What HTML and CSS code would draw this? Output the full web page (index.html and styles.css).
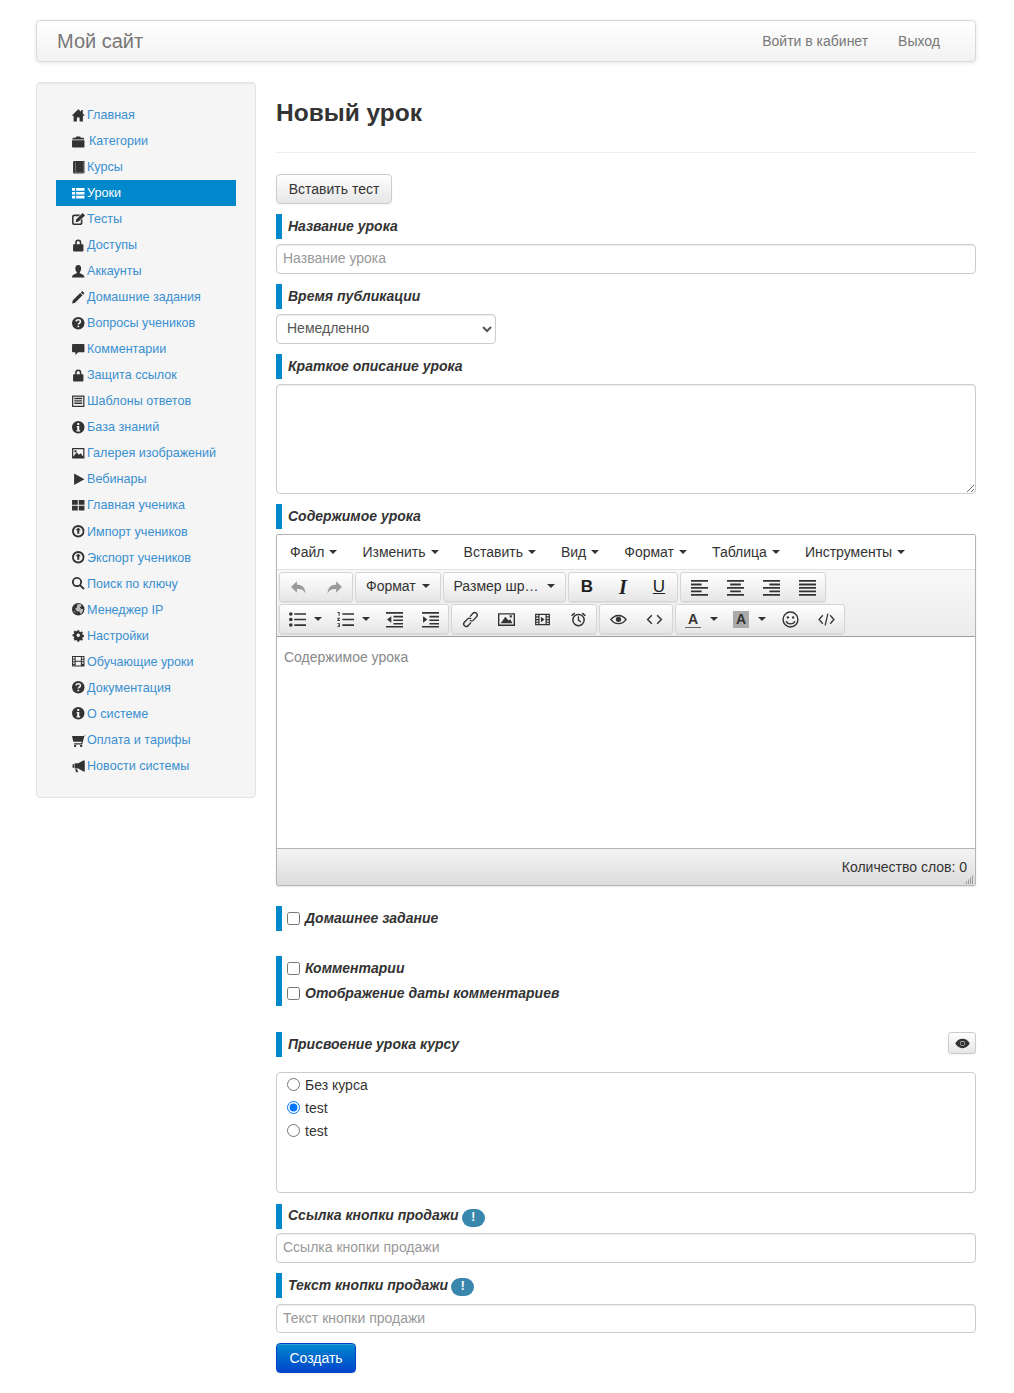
FILE: index.html
```html
<!DOCTYPE html>
<html lang="ru">
<head>
<meta charset="utf-8">
<title>Новый урок</title>
<link rel="stylesheet" href="styles.css">
</head>
<body>
<svg class="defs" xmlns="http://www.w3.org/2000/svg">
<symbol id="home" viewBox="0 0 14 14"><path d="M7 1.2 .6 7.4h1.9V13h3.2V9.2h2.6V13h3.2V7.4h1.900L11.4 5.300V2H9.800v1.700z"/></symbol>
<symbol id="folder" viewBox="0 0 14 14"><path d="M1.500 3.600h3l.6-1.100h3.800l.6 1.100h3v1.600h-11zM1 6h12v6.200q0 .8-.8.8H1.800q-.8 0-.8-.8z"/></symbol>
<symbol id="book" viewBox="0 0 14 14"><path d="M3.200 1H13v11.500h-1V13H3.200Q2 13 2 11.800V2.200Q2 1 3.200 1zM4 2v10h7.800V2z" fill-rule="evenodd"/><path d="M4.200 2h7.400v10H4.200z"/></symbol>
<symbol id="thlist" viewBox="0 0 14 14"><path d="M1 2h3v2.600H1zM5 2h8v2.600H5zM1 5.700h3v2.600H1zM5 5.700h8v2.600H5zM1 9.400h3V12H1zM5 9.400h8V12H5z"/></symbol>
<symbol id="edit" viewBox="0 0 14 14"><path d="M3 2.500h6L7.500 4H3.200q-.7 0-.7.7v5.600q0 .7.7.7h5.600q.7 0 .7-.7V8L11 6.500v4.300q0 1.700-1.700 1.700H2.700Q1 12.500 1 10.800V4.200Q1 2.500 3 2.500z"/><path d="M11.200 1 13.500 3.300 7.400 9.200 4.500 9.900 5.200 7z"/></symbol>
<symbol id="lock" viewBox="0 0 14 14"><path d="M4 6V4.500a3 3 0 0 1 6 0V6h1.200q.8 0 .8.8v5.400q0 .8-.8.8H2.800q-.8 0-.8-.8V6.800q0-.8.8-.8zM5.500 6h3V4.500a1.500 1.500 0 0 0-3 0z" fill-rule="evenodd"/></symbol>
<symbol id="user" viewBox="0 0 14 14"><path d="M7 1C5 1 4.200 2.500 4.200 4.300c0 1.500.6 2.700 1.300 3.400v1.200C3.500 9.800 1 10.500 1 13h12c0-2.500-2.500-3.200-4.500-4.100V7.700c.7-.7 1.300-1.900 1.300-3.400C9.800 2.500 9 1 7 1z"/></symbol>
<symbol id="pencil" viewBox="0 0 14 14"><path d="M10.800 1 13 3.200 11.700 4.500 9.500 2.300zM8.900 2.900 11.100 5.100 4 12.200 1 13l.8-3z"/></symbol>
<symbol id="question" viewBox="0 0 14 14"><circle cx="7" cy="7" r="6"/><path d="M5 5.300C5 3 9.200 3.100 9.100 5.400 9 7 7.100 6.800 7.100 8.300" fill="none" stroke="#f5f5f5" stroke-width="1.500"/><path d="M6.200 9.300h1.700v1.600H6.200z" fill="#f5f5f5"/></symbol>
<symbol id="comment" viewBox="0 0 14 14"><path d="M1.800 2h10.400q.8 0 .8.8v6.400q0 .8-.8.8H7l-2.800 2.600V10H1.800Q1 10 1 9.200V2.800Q1 2 1.800 2z"/></symbol>
<symbol id="listalt" viewBox="0 0 14 14"><path d="M1 1.500h12v11H1zM2.200 2.700v8.600h9.600V2.700z" fill-rule="evenodd"/><path d="M3.200 3.700h7.600v1.300H3.200zM3.200 6h7.600v1.300H3.200zM3.200 8.300h7.600v1.300H3.200z"/></symbol>
<symbol id="info" viewBox="0 0 14 14"><circle cx="7" cy="7" r="6"/><path d="M6 3h2v1.800H6zM5.500 5.800H8v4h.8V11H5.300V9.800H6V7h-.5z" fill="#f5f5f5"/></symbol>
<symbol id="picture" viewBox="0 0 14 14"><path d="M1 2h12v10H1zM2.200 3.200v6.900h9.600V3.200z" fill-rule="evenodd"/><path d="M2 10.500 5.500 6l2 2.500 2-1.500 2.500 3.500zM3.300 4.200h2v1.800h-2z"/></symbol>
<symbol id="play" viewBox="0 0 14 14"><path d="M3 1.500 13 7 3 12.500z"/></symbol>
<symbol id="thlarge" viewBox="0 0 14 14"><path d="M1 2h5.500v4.500H1zM7.500 2H13v4.500H7.500zM1 7.500h5.500V12H1zM7.500 7.500H13V12H7.500z"/></symbol>
<symbol id="circlearrow" viewBox="0 0 14 14"><path d="M7 1a6 6 0 1 0 0 12A6 6 0 0 0 7 1zm0 1.800a4.200 4.200 0 1 1 0 8.400 4.200 4.200 0 0 1 0-8.400z" fill-rule="evenodd"/><path d="M7 3.300 9.600 6H8v3.500H6V6H4.400z"/></symbol>
<symbol id="search" viewBox="0 0 14 14"><path d="M5.800 1a4.800 4.800 0 0 1 3.900 7.600l3.500 3.300-1.300 1.300-3.500-3.400A4.800 4.800 0 1 1 5.800 1zm0 1.700a3.100 3.100 0 1 0 0 6.200 3.100 3.100 0 0 0 0-6.200z" fill-rule="evenodd"/></symbol>
<symbol id="globe" viewBox="0 0 14 14"><circle cx="7" cy="7" r="6"/><path d="M6 2.500 9 2l1.500 1.500-2 1.500 1 1.500L12 7l-.8 2.500L9.500 12l-1-2.500L5.500 9 4 6.500 5.800 5zM2.500 8.500l1.500.7.500 2z" fill="#f5f5f5" opacity=".7"/></symbol>
<symbol id="cog" viewBox="0 0 14 14"><path d="M5.800 1h2.400l.3 1.700 1.200.5 1.500-1 1.600 1.700-1 1.400.5 1.200 1.700.3v2.400l-1.700.3-.5 1.200 1 1.400-1.600 1.700-1.500-1-1.200.5-.3 1.600H5.800l-.3-1.600-1.200-.5-1.500 1L1.200 11l1-1.400-.5-1.200L0 8.100V5.900l1.700-.3.500-1.200-1-1.400 1.600-1.700 1.500 1 1.200-.5zM7 4.900a2.100 2.100 0 1 0 0 4.200 2.100 2.100 0 0 0 0-4.200z" fill-rule="evenodd" transform="translate(1.500 1.500) scale(.786)"/></symbol>
<symbol id="film" viewBox="0 0 14 14"><path d="M1 2h12v10H1zM2 3v1.500h1.500V3zm0 2.500V7h1.500V5.500zM2 8v1.500h1.500V8zm0 2.500V11h1.500v-.5zM10.500 3v1.500H12V3zm0 2.500V7H12V5.500zm0 2.500v1.500H12V8zM4.500 3v3.500h5V3zm0 4.500V11h5V7.500z" fill-rule="evenodd"/></symbol>
<symbol id="cart" viewBox="0 0 14 14"><path d="M13.500 1.500 12.800 3H1l1.200 5.500h8.300L10 10H3v1.200h7.800L13 2.700h.9V1.500z"/><circle cx="4" cy="12.500" r="1.100"/><circle cx="9.800" cy="12.500" r="1.100"/></symbol>
<symbol id="bullhorn" viewBox="0 0 14 14"><path d="M12 1.500h1.300v10.500H12L7 9.200H3.500v-5H7zM3 5v3.500H1.500V5z"/><path d="M4 9.800h2l.8 3H5z"/></symbol>
<symbol id="undo" viewBox="0 0 16 16"><path d="M6.500 2v3.500c4.500 0 8 2 8 8.500-1.200-3.300-3.500-4.500-8-4.500V13L1 7.500z"/></symbol>
<symbol id="redo" viewBox="0 0 16 16"><path d="M9.500 2v3.500c-4.500 0-8 2-8 8.500 1.200-3.300 3.500-4.500 8-4.500V13L15 7.500z"/></symbol>
<symbol id="bullist" viewBox="0 0 16 16"><path d="M5 2h11v1.500H5zM5 7.200h11v1.500H5zM5 12.500h11V14H5z"/><circle cx="1.700" cy="2.800" r="1.700"/><circle cx="1.700" cy="8" r="1.700"/><circle cx="1.700" cy="13.200" r="1.700"/></symbol>
<symbol id="numlist" viewBox="0 0 16 16"><path d="M5 2h11v1.500H5zM5 7.200h11v1.500H5zM5 12.500h11V14H5zM.5 1h2v3.400h-1V1.800h-1zM.3 6.300h2.400v1L1.500 8.500h1.200v.8H.3v-.8l1.400-1.300H.3zM.3 11.500h2.400v3.600H.3v-.8h1.500v-.6H.9v-.7h.9v-.7H.3z"/></symbol>
<symbol id="outdent" viewBox="0 0 16 16"><path d="M0 1h16v1.500H0zM7 4.500h9V6H7zM7 8h9v1.500H7zM7 11.300h9v1.500H7zM0 14h16v1.500H0zM5 5v6L1 8z"/></symbol>
<symbol id="indent" viewBox="0 0 16 16"><path d="M0 1h16v1.500H0zM7 4.500h9V6H7zM7 8h9v1.500H7zM7 11.300h9v1.500H7zM0 14h16v1.500H0zM1 5v6l4-3z"/></symbol>
<symbol id="link" viewBox="0 0 16 16"><g fill="none" stroke="currentColor" stroke-width="1.300"><path d="M7.500 5.300 10.300 2.200a2.300 2.300 0 0 1 3.400 3.200l-3 3.200a2.300 2.300 0 0 1-3.300 0"/><path d="M8.500 10.700 5.700 13.800a2.300 2.300 0 0 1-3.400-3.200l3-3.200a2.300 2.300 0 0 1 3.300 0"/></g></symbol>
<symbol id="image" viewBox="0 0 16 16"><path d="M0 2h16v12H0zM1.300 3.200v9.500h13.400V3.200z" fill-rule="evenodd"/><path d="M2.500 11.500 7 5.500l2.800 3.500 1.700-1.300 2 3.800zM11 4h2v2h-2z"/></symbol>
<symbol id="media" viewBox="0 0 16 16"><path d="M1 2.500h14v11H1zM2.200 3.700V5H4V3.700zm0 2.500v1.300H4V6.200zm0 2.500V10H4V8.700zm0 2.400v1.200H4v-1.200zM12 3.700V5h1.800V3.700zm0 2.500v1.300h1.800V6.200zm0 2.500V10h1.800V8.700zm0 2.400v1.200h1.800v-1.200zM5.200 3.700v8.600h5.600V3.700z" fill-rule="evenodd"/><path d="M6.500 5.500 10 8l-3.500 2.500z"/></symbol>
<symbol id="alarm" viewBox="0 0 16 16"><path d="M8 2.500a6 6 0 1 0 0 12 6 6 0 0 0 0-12zm0 1.400a4.600 4.600 0 1 1 0 9.200 4.600 4.600 0 0 1 0-9.200z" fill-rule="evenodd"/><path d="M7.300 5h1.300v3.300l2 1.500-.8 1-2.500-1.900zM1 4l3-2.500 1 1L2 5zM15 4l-3-2.500-1 1L14 5z"/></symbol>
<symbol id="eye" viewBox="0 0 16 16"><path d="M8 3.500C4.500 3.500 1.800 5.500 0 8c1.800 2.500 4.500 4.500 8 4.500s6.200-2 8-4.500c-1.800-2.500-4.500-4.500-8-4.500zM8 4.600c2.500 0 4.700 1.300 6.300 3.400-1.600 2.100-3.800 3.400-6.300 3.400S3.300 10.100 1.700 8C3.300 5.900 5.500 4.600 8 4.600z" fill-rule="evenodd"/><circle cx="8" cy="7.800" r="2.500"/><path d="M2 7.300q6-4.500 12 0v-1Q8 2.800 2 6.300z"/></symbol>
<symbol id="eyefill" viewBox="0 0 16 16"><path d="M8 3C4.500 3 1.800 5.200.3 8c1.500 2.800 4.200 5 7.700 5s6.200-2.200 7.700-5C14.200 5.200 11.500 3 8 3zm0 2.400a2.600 2.600 0 1 1 0 5.200 2.600 2.600 0 0 1 0-5.200z" fill-rule="evenodd"/><circle cx="8" cy="8" r="2.100"/></symbol>
<symbol id="code" viewBox="0 0 16 16"><path d="M5.500 4 1.500 8l4 4M10.500 4l4 4-4 4" fill="none" stroke="currentColor" stroke-width="1.400"/></symbol>
<symbol id="source" viewBox="0 0 16 16"><path d="M4.500 4 1 8l3.500 4M11.500 4 15 8l-3.500 4M9.300 2.500 6.700 13.500" fill="none" stroke="currentColor" stroke-width="1.200"/></symbol>
<symbol id="smile" viewBox="0 0 16 16"><circle cx="8" cy="8" r="7" fill="none" stroke="currentColor" stroke-width="1.300"/><circle cx="5.500" cy="6" r="1.100"/><circle cx="10.500" cy="6" r="1.100"/><path d="M4 9.500c1 3.500 7 3.500 8 0" fill="none" stroke="currentColor" stroke-width="1.300"/></symbol>
<symbol id="alignleft" viewBox="0 0 16 16"><path d="M0 1h16v1.700H0zM0 4.300h10V6H0zM0 7.500h16v1.700H0zM0 10.800h10v1.700H0zM0 14h16v1.700H0z"/></symbol>
<symbol id="aligncenter" viewBox="0 0 16 16"><path d="M0 1h16v1.700H0zM3 4.300h10V6H3zM0 7.500h16v1.700H0zM3 10.800h10v1.700H3zM0 14h16v1.700H0z"/></symbol>
<symbol id="alignright" viewBox="0 0 16 16"><path d="M0 1h16v1.700H0zM6 4.300h10V6H6zM0 7.500h16v1.700H0zM6 10.800h10v1.700H6zM0 14h16v1.700H0z"/></symbol>
<symbol id="alignjustify" viewBox="0 0 16 16"><path d="M0 1h16v1.700H0zM0 4.300h16V6H0zM0 7.500h16v1.700H0zM0 10.800h16v1.700H0zM0 14h16v1.700H0z"/></symbol>
</svg>

<div class="page">
  <header class="navbar">
    <a class="brand">Мой сайт</a>
    <nav class="navbar-links"><a>Войти в кабинет</a><a>Выход</a></nav>
  </header>

  <div class="layout">
    <aside class="well">
      <ul class="side-nav">
        <li><a><svg class="ic"><use href="#home"/></svg>Главная</a></li>
        <li><a class="wide"><svg class="ic"><use href="#folder"/></svg>Категории</a></li>
        <li><a><svg class="ic"><use href="#book"/></svg>Курсы</a></li>
        <li class="active"><a><svg class="ic"><use href="#thlist"/></svg>Уроки</a></li>
        <li><a><svg class="ic"><use href="#edit"/></svg>Тесты</a></li>
        <li><a><svg class="ic"><use href="#lock"/></svg>Доступы</a></li>
        <li><a><svg class="ic"><use href="#user"/></svg>Аккаунты</a></li>
        <li><a><svg class="ic"><use href="#pencil"/></svg>Домашние задания</a></li>
        <li><a><svg class="ic"><use href="#question"/></svg>Вопросы учеников</a></li>
        <li><a><svg class="ic"><use href="#comment"/></svg>Комментарии</a></li>
        <li><a><svg class="ic"><use href="#lock"/></svg>Защита ссылок</a></li>
        <li><a><svg class="ic"><use href="#listalt"/></svg>Шаблоны ответов</a></li>
        <li><a><svg class="ic"><use href="#info"/></svg>База знаний</a></li>
        <li><a><svg class="ic"><use href="#picture"/></svg>Галерея изображений</a></li>
        <li><a><svg class="ic"><use href="#play"/></svg>Вебинары</a></li>
        <li><a><svg class="ic"><use href="#thlarge"/></svg>Главная ученика</a></li>
        <li><a><svg class="ic"><use href="#circlearrow"/></svg>Импорт учеников</a></li>
        <li><a><svg class="ic"><use href="#circlearrow"/></svg>Экспорт учеников</a></li>
        <li><a><svg class="ic"><use href="#search"/></svg>Поиск по ключу</a></li>
        <li><a><svg class="ic"><use href="#globe"/></svg>Менеджер IP</a></li>
        <li><a><svg class="ic"><use href="#cog"/></svg>Настройки</a></li>
        <li><a><svg class="ic"><use href="#film"/></svg>Обучающие уроки</a></li>
        <li><a><svg class="ic"><use href="#question"/></svg>Документация</a></li>
        <li><a><svg class="ic"><use href="#info"/></svg>О системе</a></li>
        <li><a><svg class="ic"><use href="#cart"/></svg>Оплата и тарифы</a></li>
        <li><a><svg class="ic"><use href="#bullhorn"/></svg>Новости системы</a></li>
      </ul>
    </aside>

    <main class="content">
      <h1 class="title">Новый урок</h1>
      <hr class="rule">
      <button class="btn insert-test" type="button">Вставить тест</button>

      <div class="mark"><b>Название урока</b></div>
      <input class="field" type="text" placeholder="Название урока">

      <div class="mark"><b>Время публикации</b></div>
      <select class="field picker"><option>Немедленно</option></select>

      <div class="mark"><b>Краткое описание урока</b></div>
      <textarea class="field area"></textarea>

      <div class="mark"><b>Содержимое урока</b></div>
      <section class="editor">
        <div class="menubar">
          <span class="menu">Файл<i class="caret"></i></span>
          <span class="menu">Изменить<i class="caret"></i></span>
          <span class="menu">Вставить<i class="caret"></i></span>
          <span class="menu">Вид<i class="caret"></i></span>
          <span class="menu">Формат<i class="caret"></i></span>
          <span class="menu">Таблица<i class="caret"></i></span>
          <span class="menu">Инструменты<i class="caret"></i></span>
        </div>
        <div class="toolbar">
          <div class="tool-row">
            <div class="group">
              <span class="tool muted"><svg class="ti"><use href="#undo"/></svg></span>
              <span class="tool muted"><svg class="ti"><use href="#redo"/></svg></span>
            </div>
            <div class="group"><span class="tool text format">Формат<i class="caret"></i></span></div>
            <div class="group"><span class="tool text size">Размер шр…<i class="caret"></i></span></div>
            <div class="group">
              <span class="tool letter bold">B</span>
              <span class="tool letter ital">I</span>
              <span class="tool letter under">U</span>
            </div>
            <div class="group">
              <span class="tool"><svg class="ti"><use href="#alignleft"/></svg></span>
              <span class="tool"><svg class="ti"><use href="#aligncenter"/></svg></span>
              <span class="tool"><svg class="ti"><use href="#alignright"/></svg></span>
              <span class="tool"><svg class="ti"><use href="#alignjustify"/></svg></span>
            </div>
          </div>
          <div class="tool-row">
            <div class="group">
              <span class="tool split"><svg class="ti"><use href="#bullist"/></svg><i class="caret"></i></span>
              <span class="tool split"><svg class="ti"><use href="#numlist"/></svg><i class="caret"></i></span>
              <span class="tool"><svg class="ti"><use href="#outdent"/></svg></span>
              <span class="tool"><svg class="ti"><use href="#indent"/></svg></span>
            </div>
            <div class="group">
              <span class="tool"><svg class="ti"><use href="#link"/></svg></span>
              <span class="tool"><svg class="ti"><use href="#image"/></svg></span>
              <span class="tool"><svg class="ti"><use href="#media"/></svg></span>
              <span class="tool"><svg class="ti"><use href="#alarm"/></svg></span>
            </div>
            <div class="group">
              <span class="tool"><svg class="ti"><use href="#eye"/></svg></span>
              <span class="tool"><svg class="ti"><use href="#code"/></svg></span>
            </div>
            <div class="group">
              <span class="tool split"><span class="color-a">A</span><i class="caret"></i></span>
              <span class="tool split"><span class="color-b">A</span><i class="caret"></i></span>
              <span class="tool"><svg class="ti"><use href="#smile"/></svg></span>
              <span class="tool"><svg class="ti"><use href="#source"/></svg></span>
            </div>
          </div>
        </div>
        <div class="edit-area">Содержимое урока</div>
        <div class="statusbar">Количество слов: 0<span class="grip"></span></div>
      </section>

      <div class="mark check-one"><label class="check"><input type="checkbox"><b>Домашнее задание</b></label></div>
      <div class="mark check-two">
        <label class="check"><input type="checkbox"><b>Комментарии</b></label>
        <label class="check"><input type="checkbox"><b>Отображение даты комментариев</b></label>
      </div>

      <div class="assign-head">
        <div class="mark flush"><b>Присвоение урока курсу</b></div>
        <button class="btn eye-btn" type="button"><svg class="eye-ic"><use href="#eyefill"/></svg></button>
      </div>
      <div class="course-box">
        <label class="radio"><input type="radio" name="course">Без курса</label>
        <label class="radio"><input type="radio" name="course" checked>test</label>
        <label class="radio"><input type="radio" name="course">test</label>
      </div>

      <div class="mark mark-close"><b>Ссылка кнопки продажи</b><span class="badge">!</span></div>
      <input class="field" type="text" placeholder="Ссылка кнопки продажи">

      <div class="mark mark-far"><b>Текст кнопки продажи</b><span class="badge">!</span></div>
      <input class="field low" type="text" placeholder="Текст кнопки продажи">

      <button class="btn primary" type="button">Создать</button>
    </main>
  </div>
</div>
</body>
</html>
```

FILE: styles.css
```css
* { box-sizing: border-box; }
html, body { margin: 0; padding: 0; background: #fff; }
body {
  font-family: "Liberation Sans", Arial, sans-serif;
  font-size: 14px;
  line-height: 20px;
  color: #333;
}
.defs { display: none; }
.page { width: 940px; margin-left: 36px; padding: 20px 0 20px; }

.navbar {
  display: flex; align-items: center; justify-content: space-between;
  height: 42px; padding: 0 35px 0 20px;
  background: linear-gradient(#fff, #f2f2f2);
  border: 1px solid #d9d9d9; border-radius: 4px;
  box-shadow: 0 1px 4px rgba(0,0,0,.1);
}
.brand { font-size: 20px; color: #777; }
.navbar-links { display: flex; gap: 30px; color: #777; }

.layout { display: flex; gap: 20px; align-items: flex-start; margin-top: 20px; }

.well {
  width: 220px; height: 716px; padding: 19px;
  background: #f5f5f5; border: 1px solid #e3e3e3; border-radius: 4px;
  box-shadow: inset 0 1px 1px rgba(0,0,0,.05);
}
.side-nav { list-style: none; margin: 0; padding: 0; }
.side-nav li { height: 26.04px; }
.side-nav a {
  display: flex; align-items: center; height: 26px;
  padding-left: 15px; color: #3a8fd0; font-size: 12.6px;
  white-space: nowrap;
}
.side-nav a.wide .ic { margin-right: 3.500px; }
.side-nav .active a { background: #08c; color: #fff; }
.ic { width: 14.500px; height: 14.500px; margin: 0 1.500px 0 0; flex: none; fill: #333; }
.side-nav .active .ic { fill: #fff; }

.content { flex: 1; min-width: 0; }
.title { margin: 14px 0 0; font-size: 24.5px; line-height: 34px; font-weight: bold; color: #333; }
.rule { margin: 22px 0 21px; border: 0; border-top: 1px solid #eee; }

.btn {
  display: block; font: inherit; color: #333; cursor: pointer;
  background: linear-gradient(#fff, #e6e6e6);
  border: 1px solid #ccc; border-radius: 4px;
  box-shadow: inset 0 1px 0 rgba(255,255,255,.2), 0 1px 2px rgba(0,0,0,.05);
}
.insert-test { width: 116px; height: 30px; padding: 0; margin-bottom: 10px; }

.mark {
  min-height: 25px; padding-left: 6px; margin-bottom: 5px;
  border-left: 6px solid #08c;
  line-height: 25px; display: flex; align-items: center;
}
.mark b { font-style: italic; font-weight: bold; font-size: 14px; }
.mark-close { height: 25px; margin-bottom: 4px; }
.mark-close b { margin-bottom: 2px; }
.mark-far { margin-bottom: 6px; }

.field {
  display: block; width: 100%; height: 30px; margin: 0 0 10px; padding: 3px 6px 5px;
  font: inherit; color: #555; background: #fff;
  border: 1px solid #ccc; border-radius: 4px;
  box-shadow: inset 0 1px 1px rgba(0,0,0,.075);
  outline: 0;
}
.field::placeholder { color: #999; opacity: 1; }
.picker { width: 220px; padding-left: 6px; }
.area { height: 110px; resize: vertical; }
.low { height: 29px; }

.editor { border: 1px solid #b5b5b5; border-radius: 2px; box-shadow: 0 1px 2px rgba(0,0,0,.1); margin-bottom: 20px; }
.menubar { display: flex; align-items: center; height: 35px; padding-left: 1px; background: #fff; border-bottom: 1px solid #e2e2e2; }
.menu { display: flex; align-items: center; padding: 0 12px; color: #333; }
.caret {
  display: inline-block; width: 0; height: 0; margin-left: 5px;
  border: 4px solid transparent; border-top-color: #333; border-bottom: 0;
}
.menu .caret { margin-right: 1px; }
.toolbar { display: flex; flex-direction: column; gap: 2px; padding: 2px; background: linear-gradient(#f8f8f8, #ececec); border-bottom: 1px solid #9e9e9e; height: 67px; }
.tool-row { display: flex; gap: 2px; }
.group {
  display: flex; height: 30px;
  background: linear-gradient(#fff, #e6e6e6);
  border: 1px solid #d5d5d5; border-radius: 3px;
  box-shadow: 0 1px 1px rgba(0,0,0,.08);
}
.tool { display: flex; align-items: center; justify-content: center; width: 36px; color: #333; fill: #333; }
.tool.muted { fill: #9a9a9a; }
.tool.split { width: 48px; gap: 4px; padding-left: 3px; }
.tool.split .caret { margin-left: 4px; }
.tool.text { padding: 0 10px 2px; justify-content: space-between; white-space: nowrap; }
.format { width: 83.5px; }
.size { width: 121.5px; }
.ti { width: 17px; height: 17px; flex: none; }
.letter { font-size: 17px; color: #222; }
.bold { font-weight: bold; }
.ital { font-style: italic; font-family: "Liberation Serif", serif; font-weight: bold; font-size: 20px; }
.under { text-decoration: underline; }
.color-a, .color-b { width: 16px; text-align: center; font-size: 14px; margin-right: 1px; font-weight: bold; }
.color-a { line-height: 16px; border-bottom: 1px solid #666; }
.color-b { line-height: 17px; background: #aaa; }
.edit-area { height: 212px; padding: 10px 7px; color: #888; border-bottom: 1px solid #b5b5b5; }
.statusbar {
  position: relative; height: 36px; padding: 8px 8px 0 0; text-align: right; color: #333;
  background: linear-gradient(#f4f4f4, #dcdcdc);
}
.grip {
  position: absolute; right: 1px; bottom: 1px; width: 10px; height: 10px;
  background: repeating-linear-gradient(90deg, #999 0 1px, transparent 1px 2px);
  clip-path: polygon(100% 0, 100% 100%, 0 100%);
}

.check-one { margin-bottom: 25px; height: 25px; }
.check-two { display: block; height: 50px; margin-bottom: 26px; }
.check { display: flex; align-items: center; height: 25px; }
.check input { width: 13px; height: 13px; margin: 0 5px 0 -1px; }
.check b { font-size: 14px; }

.assign-head { display: flex; justify-content: space-between; align-items: flex-start; margin-bottom: 15px; }
.flush { flex: 1; margin: 0; }
.eye-btn { width: 28px; height: 22px; padding: 0; display: flex; align-items: center; justify-content: center; border-radius: 3px; }
.eye-ic { width: 15px; height: 15px; fill: #333; }

.course-box {
  height: 121px; padding: 0 10px; margin-bottom: 11px;
  border: 1px solid #ccc; border-radius: 4px;
}
.radio { display: flex; align-items: center; height: 23px; color: #333; }
.radio input { width: 13px; height: 13px; margin: 0 5px 0 0; }

.badge {
  display: inline-flex; align-items: center; justify-content: center;
  width: 23px; height: 18px; margin-left: 3px; margin-top: 2px;
  background: #3a87ad; color: #fff; font-weight: bold; font-size: 12px; border-radius: 9px;
}
.primary {
  width: 80px; height: 30px; padding: 0; color: #fff;
  background: linear-gradient(#08c, #04c); border-color: #04c;
}
```
